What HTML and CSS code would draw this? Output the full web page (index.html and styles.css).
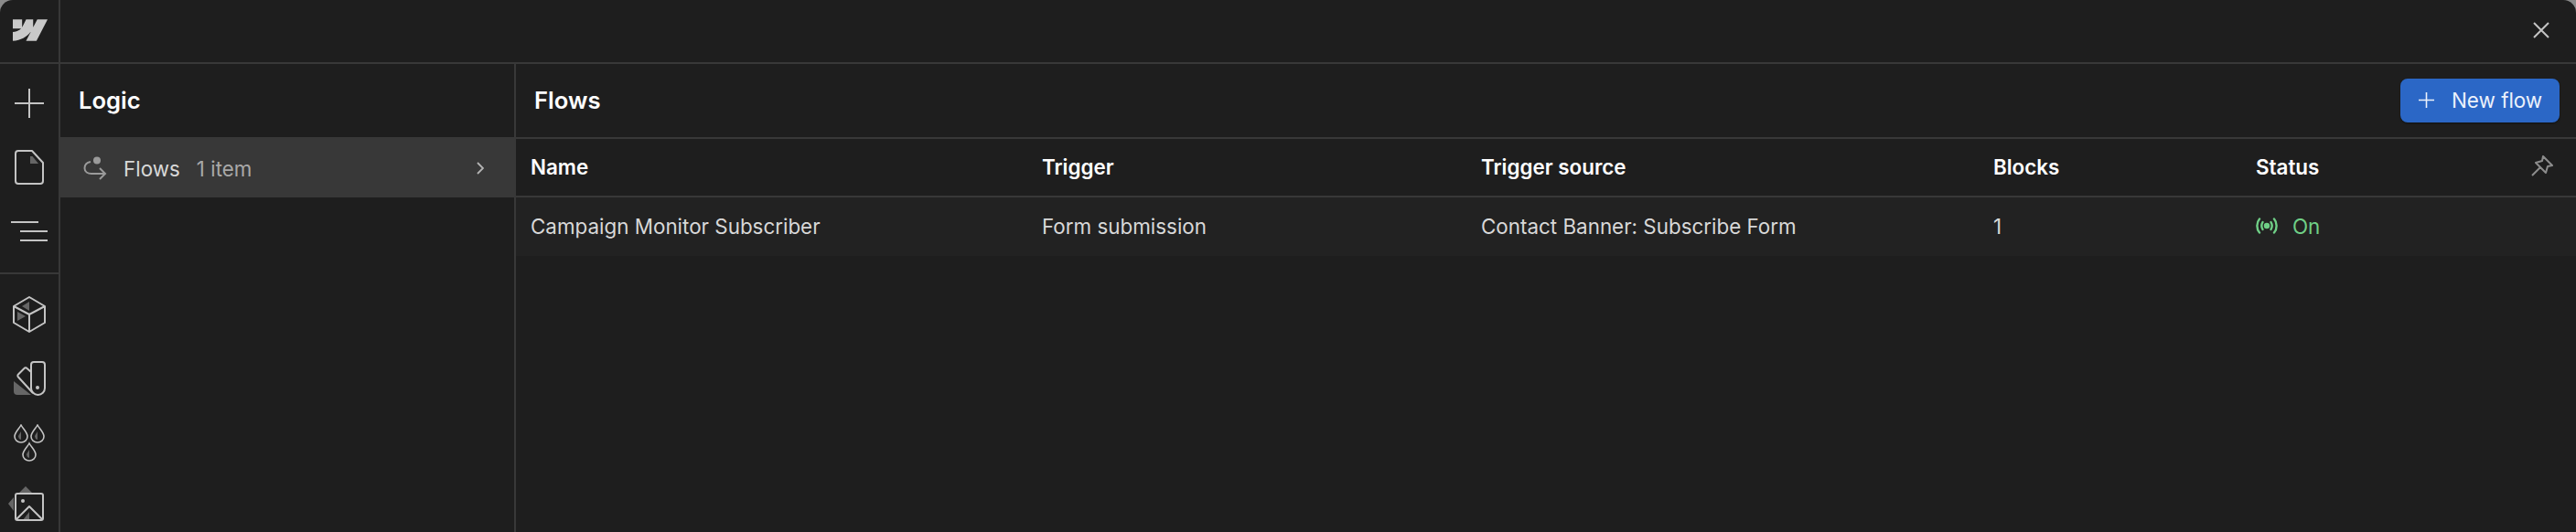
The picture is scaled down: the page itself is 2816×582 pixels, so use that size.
FILE: index.html
```html
<!DOCTYPE html>
<html lang="en">
<head>
    <meta charset="UTF-8">
    <meta name="viewport" content="width=device-width, initial-scale=1.0">
    <title>Logic - Flows</title>
    <link rel="stylesheet" href="styles.css">
</head>
<body>

    <div class="app">
        <!-- Left icon rail -->
        <div class="rail">
            <div class="rail-logo">
                <svg width="38" height="24" viewBox="0 0 24 15"><path fill="#c9c9c9" d="M24 0l-7.658 14.97H9.149l3.205-6.204h-.144C9.566 12.198 5.621 14.458 0 14.97V8.852s3.596-.213 5.71-2.435H0V0h6.417v5.278l.144-.001L9.183 0h4.854v5.244h.144L16.901 0H24z"/></svg>
            </div>
            <div class="rail-group">
                <div class="rail-item">
                    <svg width="32" height="32" viewBox="0 0 32 32"><path class="line" d="M16 0v32M0 16h32"/></svg>
                </div>
                <div class="rail-item">
                    <svg width="32" height="38" viewBox="0 0 32 38"><path class="soft" d="M17 7h2.500L26 15H17z"/><path class="line" d="M4 1H19L31 14V34a3 3 0 0 1-3 3H4a3 3 0 0 1-3-3V4a3 3 0 0 1 3-3z"/></svg>
                </div>
                <div class="rail-item">
                    <svg width="42" height="22" viewBox="0 0 42 22"><path class="line" d="M1 1h30M11 11h30M11 21h30"/></svg>
                </div>
            </div>
            <div class="rail-group rail-group-last">
                <div class="rail-item">
                    <svg width="36" height="40" viewBox="0 0 36 40"><path class="soft" d="M18 6v10l-8-5zM5 17v10l9-5z"/><path class="line" d="M18 1L35 11V29L18 39L1 29V11zM1 11L18 20L35 11M18 20V39"/></svg>
                </div>
                <div class="rail-item">
                    <svg width="36" height="38" viewBox="0 0 36 38"><path class="soft" d="M1 22V33a4 4 0 0 0 4 4H20z"/><path class="line" d="M23 1h9a3 3 0 0 1 3 3V29.500a7.500 7.500 0 0 1-15 0V4a3 3 0 0 1 3-3z"/><path class="line" d="M20 12L15.500 8a2 2 0 0 0-3 0L6 14.500a2 2 0 0 0 0 3L22 35"/><circle class="dot" cx="27" cy="29" r="2"/></svg>
                </div>
                <div class="rail-item">
                    <svg width="34" height="41" viewBox="0 0 34 41"><path class="soft" d="M8 8V17a4 4 0 0 1-3-3.500C5 12 7 10 8 8zM26 8V17a4 4 0 0 1-3-3.500C23 12 25 10 26 8zM17 28V37a4 4 0 0 1-3-3.500C14 32 16 30 17 28z"/><path class="drop" d="M8 1c2 4 7 8 7 12.500a7 6.500 0 0 1-14 0C1 9 6 5 8 1zM26 1c2 4 7 8 7 12.500a7 6.500 0 0 1-14 0C19 9 24 5 26 1zM17 21c2 4 7 8 7 12.500a7 6.500 0 0 1-14 0C10 29 15 25 17 21z"/></svg>
                </div>
                <div class="rail-item">
                    <svg width="48" height="46" viewBox="0 0 48 46"><path class="soft" d="M13 8L20 1L27 8zM1 20L7 13V28zM17 38L24 29V38z"/><path class="line" d="M11 9H37a2 2 0 0 1 2 2V36a2 2 0 0 1-2 2H11a2 2 0 0 1-2-2V11a2 2 0 0 1 2-2zM9 38L24 23L39 38"/><circle class="dot" cx="17" cy="17" r="2"/></svg>
                </div>
            </div>
        </div>

        <div class="main">
            <div class="topbar">
                <svg width="18" height="18" viewBox="0 0 18 18"><path class="close" d="M1 1l16 16M17 1L1 17"/></svg>
            </div>

            <div class="panels">
                <!-- Logic list -->
                <div class="side">
                    <div class="side-title">Logic</div>
                    <div class="side-row">
                        <svg class="flow-icon" width="26" height="26" viewBox="0 0 26 26"><circle cx="15" cy="4.500" r="4" fill="#9a9a9a"/><path class="flow-line" d="M8 6C3 7 1.500 10 1.500 13C1.500 17 5 19 9 19H24M18 13l6 6-6 6"/></svg>
                        <span class="side-name">Flows</span>
                        <span class="side-count">1 item</span>
                        <svg class="chevron" width="8" height="14" viewBox="0 0 8 14"><path d="M1 1l6 6-6 6"/></svg>
                    </div>
                </div>

                <!-- Flows table -->
                <div class="content">
                    <div class="content-head">
                        <div class="content-title">Flows</div>
                        <button class="new-btn">
                            <svg width="17" height="17" viewBox="0 0 17 17"><path d="M8.500 0v17M0 8.500h17"/></svg>
                            New flow
                        </button>
                    </div>

                    <div class="table-row table-header">
                        <div class="col-name">Name</div>
                        <div class="col-trigger">Trigger</div>
                        <div class="col-source">Trigger source</div>
                        <div class="col-blocks">Blocks</div>
                        <div class="col-status">Status</div>
                        <svg class="pin" width="24" height="24" viewBox="0 0 24 24"><path d="M1 22L10 13M13 1L23 11L18 12L16 19L5 8L12 6z"/></svg>
                    </div>

                    <div class="table-row table-body">
                        <div class="col-name">Campaign Monitor Subscriber</div>
                        <div class="col-trigger">Form submission</div>
                        <div class="col-source">Contact Banner: Subscribe Form</div>
                        <div class="col-blocks">1</div>
                        <div class="col-status status-on">
                            <svg width="24" height="18" viewBox="0 0 24 18"><circle cx="12" cy="9" r="2" fill="#6fcf86"/><path d="M7.500 5C6 7.500 6 10.500 7.500 13M16.500 5C18 7.500 18 10.500 16.500 13M4 1.500C0.500 5.500 0.500 12.500 4 16.500M20 1.500C23.500 5.500 23.500 12.500 20 16.500"/></svg>
                            On
                        </div>
                    </div>
                </div>
            </div>
        </div>
    </div>

</body>
</html>
```

FILE: styles.css
```css
* {
    box-sizing: border-box;
}

html, body {
    height: 100%;
}

body {
    margin: 0;
    overflow: hidden;
    background-color: #8a8a8a;
    font-family: Inter, "Liberation Sans", sans-serif;
    font-size: 22.4px;
    color: #d8d8d8;
}

.app {
    display: flex;
    height: 582px;
    background-color: #1e1e1e;
    border-radius: 14px 14px 0 0;
    overflow: hidden;
}

.rail {
    width: 66px;
    flex-shrink: 0;
    border-right: 2px solid #383838;
    display: flex;
    flex-direction: column;
}

.rail-logo {
    height: 70px;
    padding: 0 0 2px 2px;
    border-bottom: 2px solid #383838;
    display: flex;
    align-items: center;
    justify-content: center;
}

.rail-group {
    height: 230px;
    padding-top: 8px;
    border-bottom: 2px solid #383838;
}

.rail-group-last {
    border-bottom: none;
    padding-top: 9px;
}

.rail-item {
    height: 70px;
    display: flex;
    align-items: center;
    justify-content: center;
}

.line {
    fill: none;
    stroke: #c4c4c4;
    stroke-width: 2;
    stroke-linejoin: round;
}

.drop {
    fill: none;
    stroke: #c4c4c4;
    stroke-width: 1.600;
}

.soft {
    fill: #666666;
}

.dot {
    fill: #c4c4c4;
}

.main {
    flex: 1;
    display: flex;
    flex-direction: column;
}

.topbar {
    height: 70px;
    padding-right: 29px;
    padding-bottom: 2px;
    border-bottom: 2px solid #383838;
    display: flex;
    align-items: center;
    justify-content: flex-end;
}

.close {
    fill: none;
    stroke: #c4c4c4;
    stroke-width: 2;
}

.panels {
    flex: 1;
    display: flex;
}

.side {
    width: 498px;
    flex-shrink: 0;
    border-right: 2px solid #383838;
}

.side-title {
    height: 80px;
    padding: 0 0 1px 20px;
    display: flex;
    align-items: center;
    font-size: 25.6px;
    font-weight: 600;
    color: #ffffff;
}

.side-row {
    height: 66px;
    padding: 2px 33px 0 25px;
    background-color: #383838;
    display: flex;
    align-items: center;
}

.flow-icon {
    margin-right: 18px;
}

.flow-line {
    fill: none;
    stroke: #9a9a9a;
    stroke-width: 2;
}

.side-name {
    color: #d8d8d8;
    margin-right: 18px;
}

.side-count {
    color: #a8a8a8;
}

.chevron {
    margin-left: auto;
    fill: none;
    stroke: #b4b4b4;
    stroke-width: 1.800;
}

.content {
    flex: 1;
    display: flex;
    flex-direction: column;
}

.content-head {
    height: 82px;
    padding: 0 18px 1px 20px;
    border-bottom: 2px solid #383838;
    display: flex;
    align-items: center;
    justify-content: space-between;
}

.content-title {
    font-size: 25.6px;
    font-weight: 600;
    color: #ffffff;
}

.new-btn {
    width: 174px;
    height: 48px;
    padding: 0 0 0 20px;
    background-color: #2b67c6;
    border: none;
    border-radius: 8px;
    box-shadow: 0 1px 2px rgba(0, 0, 0, 0.5);
    display: flex;
    align-items: center;
    gap: 19px;
    font-family: inherit;
    font-size: 22.4px;
    color: #ebf1fb;
}

.new-btn svg {
    fill: none;
    stroke: #ebf1fb;
    stroke-width: 1.600;
}

.table-row {
    display: flex;
    align-items: center;
    padding-left: 16px;
    padding-bottom: 2px;
}

.table-header {
    height: 64px;
    border-bottom: 2px solid #383838;
    font-weight: 600;
    color: #ffffff;
}

.table-body {
    height: 64px;
    background-color: #222222;
    color: #d8d8d8;
}

.col-name {
    width: 559px;
}

.col-trigger {
    width: 480px;
}

.col-source {
    width: 560px;
}

.col-blocks {
    width: 287px;
}

.col-status {
    width: 290px;
}

.status-on {
    display: flex;
    align-items: center;
    gap: 16px;
    color: #6fcf86;
}

.status-on svg {
    fill: none;
    stroke: #6fcf86;
    stroke-width: 2.400;
    stroke-linecap: round;
}

.pin {
    margin-left: auto;
    margin-right: 25px;
    fill: none;
    stroke: #8c8c8c;
    stroke-width: 2;
    stroke-linejoin: round;
}
```
